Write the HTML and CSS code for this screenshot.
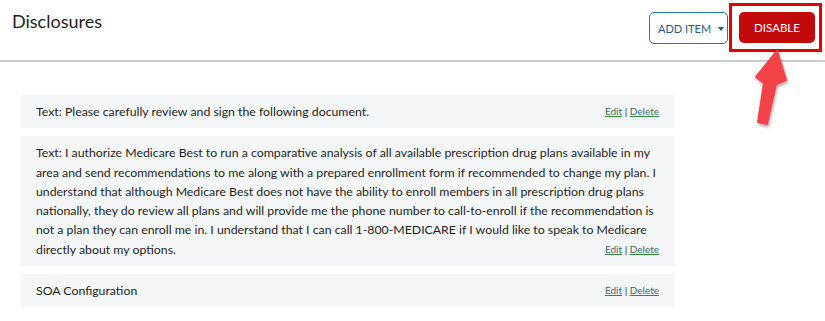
FILE: index.html
```html
<!DOCTYPE html>
<html lang="en">
<head>
  <meta charset="UTF-8" />
  <meta name="viewport" content="width=device-width, initial-scale=1.0" />
  <title>Disclosures</title>
  <link rel="stylesheet" href="styles.css">
</head>
<body>
  <header class="page-header">
    <h1>Disclosures</h1>
    <div class="actions">
      <button class="btn btn-outline">ADD ITEM <span class="caret"></span></button>
      <button class="btn btn-danger">DISABLE</button>
    </div>
  </header>

  <div class="content">
    <div class="item">
      <p>Text: Please carefully review and sign the following document.<span class="item-links"><a href="#">Edit</a> | <a href="#">Delete</a></span></p>
    </div>
    <div class="item">
      <p>Text: I authorize Medicare Best to run a comparative analysis of all available prescription drug plans available in my area and send recommendations to me along with a prepared enrollment form if recommended to change my plan. I understand that although Medicare Best does not have the ability to enroll members in all prescription drug plans nationally, they do review all plans and will provide me the phone number to call-to-enroll if the recommendation is not a plan they can enroll me in. I understand that I can call 1-800-MEDICARE if I would like to speak to Medicare directly about my options.<span class="item-links"><a href="#">Edit</a> | <a href="#">Delete</a></span></p>
    </div>
    <div class="item">
      <p>SOA Configuration<span class="item-links"><a href="#">Edit</a> | <a href="#">Delete</a></span></p>
    </div>
  </div>

  <!-- annotation -->
  <div class="callout-box"></div>
  <svg class="callout-arrow" width="60" height="90" viewBox="740 45 60 90">
    <defs>
      <filter id="shadow" x="-50%" y="-50%" width="200%" height="200%">
        <feDropShadow dx="1" dy="2" stdDeviation="1.5" flood-color="#000" flood-opacity="0.35"/>
      </filter>
    </defs>
    <polygon points="777,51 786,80 776,84 767,124 758,122 764,83 756,77" fill="#f4424a" stroke="#f4424a" stroke-width="2" stroke-linejoin="round" filter="url(#shadow)"/>
  </svg>
</body>
</html>
```

FILE: styles.css
```css
body {
  margin: 0;
  font-family: Lato, "Liberation Sans", sans-serif;
  color: #1c1f23;
  background: #fff;
}
.page-header {
  display: flex;
  justify-content: space-between;
  align-items: flex-start;
  height: 62px;
  box-sizing: border-box;
  padding: 12px 10px 0 12px;
  border-bottom: 2px solid #c9cdd2;
}
.page-header h1 {
  margin: 0;
  font-size: 18px;
  font-weight: 400;
  line-height: 19px;
}
.actions {
  display: flex;
  gap: 11px;
}
.btn {
  font-family: inherit;
  font-size: 11.5px;
  height: 32px;
  padding: 0 8px;
  border-radius: 5px;
  white-space: nowrap;
  cursor: pointer;
}
.btn-outline {
  background: #fff;
  border: 1px solid #1f78ad;
  color: #2b5a84;
  font-size: 11px;
  width: 79px;
}
.btn-danger {
  background: #c20a0b;
  border: none;
  color: #fff;
  width: 76px;
  height: 31px;
}
.caret {
  display: inline-block;
  margin-left: 4px;
  vertical-align: 2px;
  border-left: 3px solid transparent;
  border-right: 3px solid transparent;
  border-top: 4px solid #2b5a84;
}
.content {
  padding: 33px 0 0 21px;
}
.item {
  width: 653px;
  box-sizing: border-box;
  background: #f5f6f8;
  padding: 7px 15px;
  margin-bottom: 8px;
}
.item p {
  margin: 0;
  font-size: 12.3px;
  line-height: 19.3px;
}
.item-links {
  float: right;
  font-size: 10px;
}
.item-links a {
  color: #3a6b5a;
  text-decoration-color: #2e8b3e;
}
.callout-box {
  position: absolute;
  left: 729px;
  top: 3px;
  width: 87px;
  height: 43px;
  border: 3px solid #e60000;
}
.callout-arrow {
  position: absolute;
  left: 740px;
  top: 45px;
}
```
